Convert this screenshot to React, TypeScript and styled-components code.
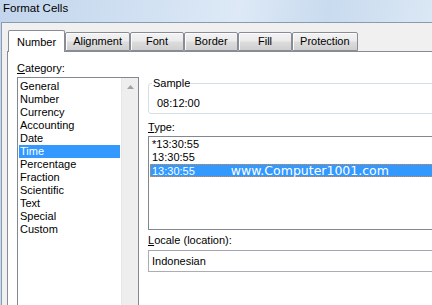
import React from 'react';
import styled, { createGlobalStyle } from 'styled-components';

const GlobalStyle = createGlobalStyle`
  html, body {
    margin: 0;
    padding: 0;
    width: 432px;
    height: 305px;
    overflow: hidden;
    background: #f0f0f0;
  }
  body {
    font-family: "Liberation Sans", Arial, sans-serif;
    font-size: 11px;
    color: #000;
  }
`;

const Window = styled.div`
  width: 480px;
  height: 305px;
  overflow: hidden;
  display: flex;
  flex-direction: column;
  background: linear-gradient(
    100deg,
    #c2d5ec 0%,
    #d3e2f3 30%,
    #dde9f6 45%,
    #c9dbef 62%,
    #d9e6f4 80%,
    #e6eff9 100%
  );
`;

const TitleBar = styled.div`
  flex-shrink: 0;
  height: 22px;
  box-sizing: border-box;
  padding: 1px 0 0 3px;
  font-size: 11.5px;
  line-height: 14px;
  color: #000;
`;

const Body = styled.div`
  flex: 1;
  min-height: 0;
  display: flex;
  flex-direction: column;
  margin-left: 1px;
  padding: 7px 0 0 5px;
  border-top: 1px solid #8a9bb0;
  border-left: 1px solid #8a9bb0;
  background: #f0f0f0;
`;

const TabStrip = styled.div`
  flex-shrink: 0;
  display: flex;
  align-items: flex-end;
  height: 21px;
  padding-left: 1px;
`;

const Tab = styled.div<{ $active?: boolean }>`
  box-sizing: border-box;
  min-width: ${(p) => (p.$active ? 56 : 54)}px;
  padding: ${(p) => (p.$active ? '5px 8px 0' : '2px 7px 0')};
  height: ${(p) => (p.$active ? 22 : 19)}px;
  margin-bottom: ${(p) => (p.$active ? -1 : 0)}px;
  border: 1px solid #898c95;
  border-bottom: ${(p) => (p.$active ? 'none' : '1px solid #898c95')};
  border-radius: 2px 2px 0 0;
  background: ${(p) =>
    p.$active
      ? '#ffffff'
      : 'linear-gradient(#f3f3f3 0%, #ebebeb 48%, #dddddd 52%, #cfcfcf 100%)'};
  box-shadow: ${(p) => (p.$active ? 'none' : 'inset 1px 1px 0 #fcfcfc')};
  text-align: center;
  line-height: 13px;
  white-space: nowrap;
  position: relative;
  z-index: ${(p) => (p.$active ? 1 : 0)};
`;

const Panel = styled.div`
  flex: 1;
  min-height: 0;
  display: flex;
  gap: 9px;
  padding: 10px 0 0 9px;
  background: #ffffff;
  border-top: 1px solid #898c95;
  border-left: 1px solid #898c95;
`;

const LeftColumn = styled.div`
  width: 122px;
  display: flex;
  flex-direction: column;
`;

const RightColumn = styled.div`
  flex: 1;
  display: flex;
  flex-direction: column;
  min-width: 0;
`;

const Label = styled.div<{ $gap?: number }>`
  flex-shrink: 0;
  line-height: 13px;
  margin-top: ${(p) => p.$gap ?? 0}px;
`;

const CategoryBox = styled.div`
  margin-top: 2px;
  height: 240px;
  flex-shrink: 0;
  display: flex;
  border: 1px solid #828790;
`;

const CategoryItems = styled.div`
  flex: 1;
  padding: 2px 1px 0 1px;
`;

const CategoryItem = styled.div<{ $selected?: boolean }>`
  height: 13px;
  line-height: 13px;
  padding-left: 1px;
  background: ${(p) => (p.$selected ? '#3399ff' : 'transparent')};
  color: ${(p) => (p.$selected ? '#ffffff' : '#000')};
`;

const ScrollTrack = styled.div`
  width: 17px;
  display: flex;
  justify-content: center;
  padding-top: 7px;
  box-sizing: border-box;
  background: #eeeeee;
  border-left: 1px solid #e6e6e6;
`;

const SampleGroup = styled.fieldset`
  flex-shrink: 0;
  margin: 15px 0 0 0;
  padding: 0 0 3px 3px;
  border: 1px solid #d5dfe5;
  border-radius: 3px;
  min-width: 0;
`;

const Legend = styled.legend`
  padding: 0 1px;
  line-height: 13px;
`;

const SampleValue = styled.div`
  margin: 7px 0 0 5px;
  line-height: 13px;
`;

const TypeBox = styled.div`
  flex-shrink: 0;
  margin-top: 2px;
  height: 94px;
  box-sizing: border-box;
  padding: 1px;
  border: 1px solid #828790;
`;

const TypeRow = styled.div<{ $selected?: boolean }>`
  height: 13px;
  box-sizing: border-box;
  line-height: 11px;
  padding-left: 1px;
  white-space: nowrap;
  border: 1px ${(p) => (p.$selected ? 'dotted #e8822c' : 'solid transparent')};
  background: ${(p) => (p.$selected ? '#3399ff' : 'transparent')};
  color: ${(p) => (p.$selected ? '#ffffff' : '#000')};
`;

const Watermark = styled.span`
  margin-left: 36px;
  font-family: "DejaVu Sans", Verdana, sans-serif;
  font-size: 12.5px;
  color: #ffffff;
`;

const LocaleBox = styled.div`
  flex-shrink: 0;
  margin-top: 3px;
  height: 22px;
  box-sizing: border-box;
  padding-left: 3px;
  line-height: 20px;
  border: 1px solid #abadb3;
  border-top-color: #a3a6ad;
`;

const tabs = ['Number', 'Alignment', 'Font', 'Border', 'Fill', 'Protection'];

const categories = [
  'General',
  'Number',
  'Currency',
  'Accounting',
  'Date',
  'Time',
  'Percentage',
  'Fraction',
  'Scientific',
  'Text',
  'Special',
  'Custom',
];

const types = ['*13:30:55', '13:30:55', '13:30:55'];

export default function App() {
  return (
    <>
      <GlobalStyle />
      <Window>
        <TitleBar>Format Cells</TitleBar>
        <Body>
          <TabStrip>
            {tabs.map((t, i) => (
              <Tab key={t} $active={i === 0}>
                {t}
              </Tab>
            ))}
          </TabStrip>
          <Panel>
            <LeftColumn>
              <Label>
                <u>C</u>ategory:
              </Label>
              <CategoryBox>
                <CategoryItems>
                  {categories.map((c) => (
                    <CategoryItem key={c} $selected={c === 'Time'}>
                      {c}
                    </CategoryItem>
                  ))}
                </CategoryItems>
                <ScrollTrack>
                  <svg width="7" height="4" viewBox="0 0 7 4">
                    <polygon points="3.5,0 7,4 0,4" fill="#a2a2a2" />
                  </svg>
                </ScrollTrack>
              </CategoryBox>
            </LeftColumn>
            <RightColumn>
              <SampleGroup>
                <Legend>Sample</Legend>
                <SampleValue>08:12:00</SampleValue>
              </SampleGroup>
              <Label $gap={7}>
                <u>T</u>ype:
              </Label>
              <TypeBox>
                {types.map((t, i) => (
                  <TypeRow key={i} $selected={i === 2}>
                    {t}
                    {i === 2 && <Watermark>www.Computer1001.com</Watermark>}
                  </TypeRow>
                ))}
              </TypeBox>
              <Label $gap={4}>
                <u>L</u>ocale (location):
              </Label>
              <LocaleBox>Indonesian</LocaleBox>
            </RightColumn>
          </Panel>
        </Body>
      </Window>
    </>
  );
}
